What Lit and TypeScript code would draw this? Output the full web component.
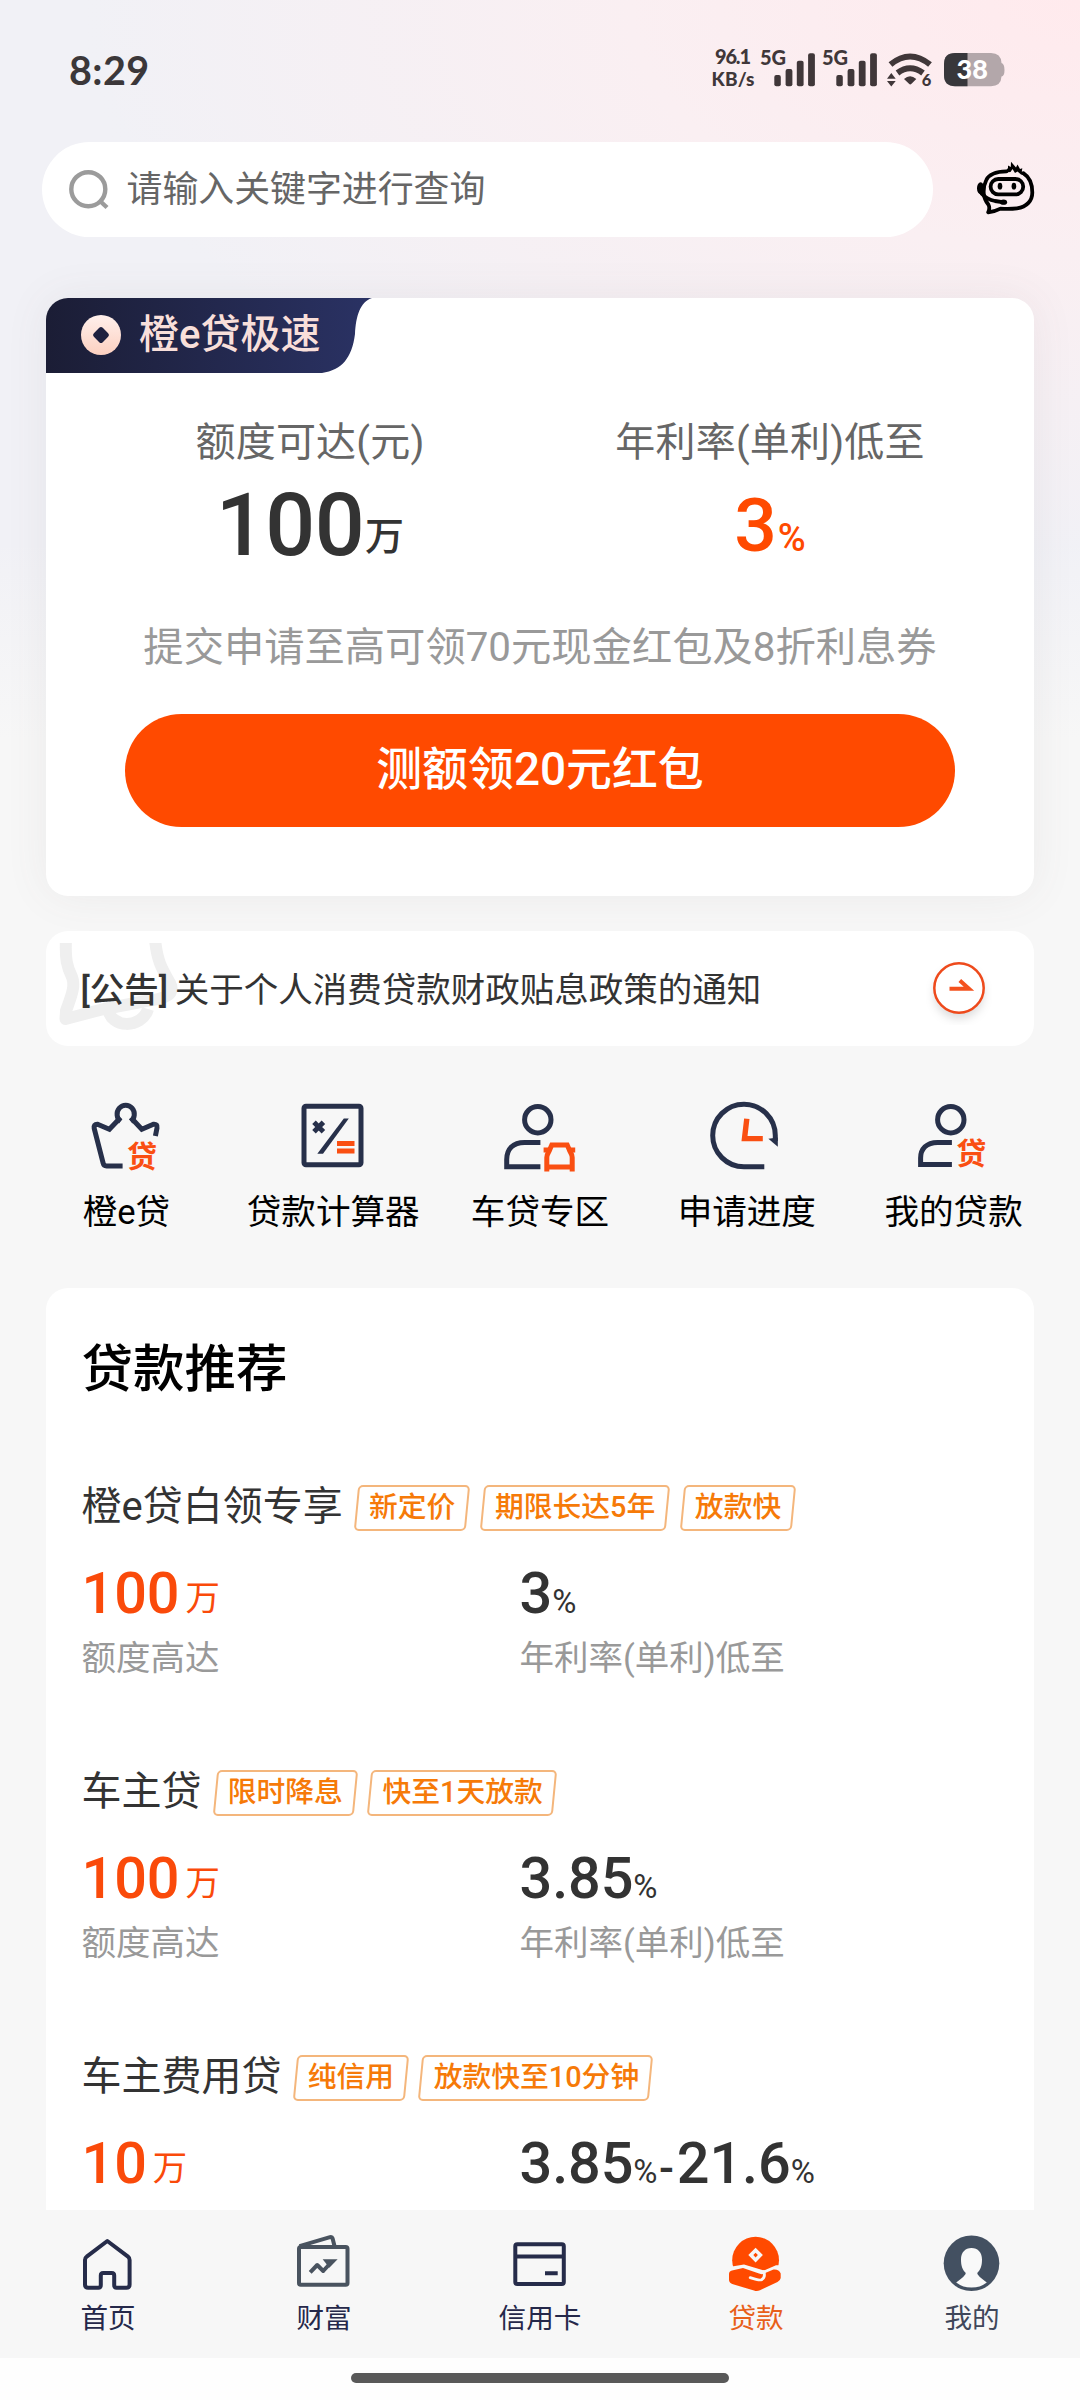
import { LitElement, html, svg, css, nothing } from "lit";
import { customElement, property } from "lit/decorators.js";

interface Product {
  name: string;
  tags: string[];
  amount: string;
  rates: string[];
  labels: boolean;
}

const PRODUCTS: Product[] = [
  { name: "橙e贷白领专享", tags: ["新定价", "期限长达5年", "放款快"], amount: "100", rates: ["3"], labels: true },
  { name: "车主贷", tags: ["限时降息", "快至1天放款"], amount: "100", rates: ["3.85"], labels: true },
  { name: "车主费用贷", tags: ["纯信用", "放款快至10分钟"], amount: "10", rates: ["3.85", "21.6"], labels: false },
];

const menuIcons: Record<string, unknown> = {
  crown: svg`
    <g class="line">
      <path d="M36.6 70H20.5Q17.8 70 17.2 67.3L8.2 32.5Q7.3 28.2 11.5 28.3L23.4 33.2L34.6 21.5"/>
      <path d="M34.6 25.5A8.6 9 0 1 1 44.8 25.5"/>
      <path d="M44.8 21.5L55.8 33.2L67.5 28.3Q71.8 28 71 32L69.4 40"/>
    </g>
    <text class="glyph" x="41" y="70.6">贷</text>`,
  calc: svg`
    <g class="line"><rect x="12" y="10.3" width="57" height="58.4" rx="2"/><path d="M22 26.3L31.4 35.7M31.4 26.3L22 35.7"/></g>
    <path class="navy" d="M51.8 22.4H56.8L31 57.7H25.3Z"/>
    <path class="orange" d="M45 45H62.5V50H45ZM45 52.5H62.5V57.5H45Z"/>`,
  car: svg`
    <g class="line"><circle cx="38.8" cy="23.7" r="13.2"/><path d="M41.4 46.4H25.5C14 46.4 7.7 53 7.7 63.5V70.8H41.4"/></g>
    <g class="accent"><path d="M47.8 75.5V61.5C47.8 57.5 50 56.5 51 53L52.8 48.9H68.2L70 53C71 56.5 73.2 57.5 73.2 61.5V75.5M47.8 70.9H73.2"/></g>
    <path class="orange" d="M44.6 51.5H51V56.5H44.6ZM70 51.5H76.2V56.5H70Z"/>`,
  clock: svg`
    <g class="line"><path d="M69.3 45V39.5A31.3 31.3 0 1 0 38 70.8H58.3"/></g>
    <path class="navy" d="M62.4 42.7L71.8 41.5V50.8Z"/>
    <path class="clockhand" d="M40.8 22.7L38.5 42.6H56.8"/>`,
  mine: svg`
    <g class="line"><circle cx="37.8" cy="23.7" r="13.2"/><path d="M38.9 46.4H24.5C13.5 46.4 7.6 53 7.6 62V68.6H38.9"/></g>
    <text class="glyph" x="43.2" y="68.2">贷</text>`,
};

const tabIcons: Record<string, unknown> = {
  home: svg`<g class="line"><path d="M29.3 7L50 22.6Q51.6 23.8 51.6 26V50.5Q51.6 53.7 48.5 53.7H38.5Q36.2 53.7 36.2 51V41.5Q36.2 39 33.7 39H25.2Q22.8 39 22.8 41.5V51Q22.8 53.7 20.4 53.7H10Q7 53.7 7 50.5V26Q7 23.8 8.7 22.6Z"/></g>`,
  wealth: svg`
    <g class="line grey"><rect x="5" y="13" width="48.5" height="37.7" rx="1.8"/><path d="M5.5 12.2L36 3.2Q38 2.7 38.6 4.5L40.6 12.5M16.2 38.3L23.2 31L29.2 37L37 28.5"/></g>
    <path class="greyfill" d="M28.7 25.2H43.6L35.3 33.8Z"/>`,
  card: svg`<g class="line"><rect x="5.3" y="10.3" width="48.5" height="39.8" rx="2"/><path d="M5.3 22.4H53.8M35 39.3H47.7"/></g>`,
  loan: svg`
    <circle cx="29.6" cy="26.2" r="23.4" fill="#ff4a00"/>
    <path fill="#f7f7f7" d="M0 33.6L18 30.4L38 36.4L50 31.2H60V60H0Z"/>
    <path fill="#ff4a00" d="M3 40Q3 37.3 6 36.6L17 34L33 39.5Q36.5 41 38 39.5L47.5 35.5Q53 35 54.7 39.5V44Q54.6 46 51.5 48L34 56.2Q31 57.7 28 56.5L7 50.3Q3 48.7 3 46Z"/>
    <path fill="none" stroke="#f7f7f7" stroke-width="2.8" stroke-linecap="round" d="M37.8 37.5Q39.8 43.5 35.5 45.7Q33.5 46.8 24.2 43.6"/>
    <path fill="#f7f7f7" fill-rule="evenodd" d="M29.6 13.8L36.9 21.1L29.6 28.4L22.3 21.1ZM29.6 18.8L27.3 21.1L29.6 23.4L31.9 21.1Z"/>`,
  user: svg`
    <circle cx="29.5" cy="29.3" r="27.8" fill="#435061"/>
    <path fill="#f9f9f9" d="M29.5 14C36 14 40 18.5 40 25.5C40 32 38.5 36 35.2 39Q35 41.5 44.8 48.4Q38 53.6 29.5 53.6Q21 53.6 14.2 48.4Q24 41.5 23.8 39C20.5 36 19 32 19 25.5C19 18.5 23 14 29.5 14Z"/>`,
};

@customElement("skew-tag")
class SkewTag extends LitElement {
  static styles = css`
    :host { display: block; }
    .tag {
      position: relative;
      height: 45.5px;
      padding: 0 14.4px 0 15.2px;
      font: 500 28.8px/44px Roboto, "Noto Sans CJK SC", sans-serif;
      color: #f67a08;
      white-space: nowrap;
    }
    .frame {
      position: absolute;
      inset: 0 2px;
      border: 2px solid #f4b67c;
      border-radius: 5px;
      transform: skewX(-5.5deg);
    }
  `;
  render() {
    return html`<div class="tag"><div class="frame"></div><slot></slot></div>`;
  }
}

@customElement("loan-item")
class LoanItem extends LitElement {
  @property({ attribute: false }) item!: Product;
  static styles = css`
    :host { display: block; height: 285px; }
    .head { display: flex; height: 46px; gap: 10px; }
    .name { font-size: 40px; line-height: 44px; color: #333; white-space: nowrap; margin-right: 1px; }
    .cols { display: grid; grid-template-columns: 438px 1fr; margin-top: 30px; }
    .value { font-size: 57.6px; line-height: 66px; height: 64px; font-weight: 500; color: #333; letter-spacing: -0.1px; white-space: nowrap; }
    .value.hot { color: #fa4a0a; }
    .unit { font-size: 33px; line-height: 1; font-weight: 400; letter-spacing: 0; }
    .wan { font-size: 34.4px; vertical-align: 3px; margin-left: 6px; }
    .dash { font-size: 44px; line-height: 1; margin: 0 3px 0 1.5px; }
    .label { font-size: 34.5px; line-height: 44px; margin-top: 11px; color: #999; }
  `;
  render() {
    const { name, tags, amount, rates, labels } = this.item;
    return html`
      <div class="head">
        <div class="name">${name}</div>
        ${tags.map((t) => html`<skew-tag>${t}</skew-tag>`)}
      </div>
      <div class="cols">
        <div>
          <div class="value hot">${amount}<span class="unit wan">万</span></div>
          ${labels ? html`<div class="label">额度高达</div>` : nothing}
        </div>
        <div>
          <div class="value">${rates.map((r, i) => html`${i ? html`<span class="dash">-</span>` : ""}${r}<span class="unit">%</span>`)}</div>
          ${labels ? html`<div class="label">年利率(单利)低至</div>` : nothing}
        </div>
      </div>`;
  }
}

@customElement("status-bar")
class StatusBar extends LitElement {
  static styles = css`
    :host { display: block; height: 142px; }
    .bar { display: flex; justify-content: space-between; align-items: flex-start; padding: 34px 73px 0 69px; font-family: Lato, sans-serif; color: #3b3739; }
    .time { font-size: 39.5px; line-height: 40px; font-weight: 700; letter-spacing: .4px; padding-top: 16px; }
    .icons { display: block; }
    text { font-family: Lato, sans-serif; font-weight: 900; fill: #403739; }
    .fill { fill: #403739; }
    .arc { fill: none; stroke: #403739; stroke-width: 6; }
  `;
  private bars(x: number) {
    return svg`
      <rect class="fill" x=${x} y="25" width="6.5" height="11.3" rx="2"/>
      <rect class="fill" x=${x + 11.3} y="19" width="6.8" height="17.3" rx="2"/>
      <rect class="fill" x=${x + 22.5} y="10.7" width="6.8" height="25.6" rx="2"/>
      <rect class="fill" x=${x + 33.8} y="3.2" width="6.8" height="33.1" rx="2"/>`;
  }
  render() {
    return html`<div class="bar">
      <div class="time">8:29</div>
      <svg class="icons" width="297" height="72" viewBox="0 -16 297 72">
        <text x="5" y="14.4" font-size="20" textLength="36">96.1</text>
        <text x="1.5" y="36.2" font-size="19" textLength="43">KB/s</text>
        <text x="50" y="15.2" font-size="20" textLength="26">5G</text>
        ${this.bars(64.3)}
        <text x="112" y="15.2" font-size="20" textLength="26">5G</text>
        ${this.bars(126.3)}
        <path class="arc" d="M180.5 14.5Q200 -1.5 220 14.5M187.5 23Q200 13.5 213 23"/>
        <path class="fill" d="M194 29Q200 23.5 206.3 29L201.5 33.8Q200.2 35 199 33.8ZM177 28.7L181.3 23L185.7 28.7ZM177 31L181.3 36.6L185.7 31Z"/>
        <text x="211.8" y="36.4" font-size="16.5">6</text>
        <path fill="#b3a7aa" d="M245 3H281Q291 3 291.5 13Q294.5 14 294.5 20Q294.5 26 291.5 26.5Q291 36.2 281 36.2H245Q234 36.2 234 25V14Q234 3 245 3Z"/>
        <path fill="#38373b" d="M245 3H257.5V36.2H245Q234 36.2 234 25V14Q234 3 245 3Z"/>
        <text x="246.6" y="29.4" font-size="27" style="fill:#fff">38</text>
      </svg>
    </div>`;
  }
}

@customElement("app-root")
class AppRoot extends LitElement {
  static styles = css`
    :host { display: block; width: 1080px; height: 2400px; overflow: hidden; background: #fff; font-family: Roboto, "Noto Sans CJK SC", sans-serif; }
    * { box-sizing: border-box; }
    .page {
      height: 2210px; overflow: hidden;
      background:
        linear-gradient(180deg, rgba(247,247,247,0) 0 540px, #f7f7f7 740px),
        radial-gradient(ellipse 1000px 560px at 1080px 0, #ffeaed 0%, #faeff2 45%, rgba(243,241,246,0) 100%),
        #f1f1f6;
    }
    .search-row { display: flex; align-items: center; padding-left: 42px; }
    .search { width: 891px; height: 95px; border-radius: 48px; background: #fff; display: flex; align-items: center; gap: 15.5px; padding-left: 25px; font-size: 35.9px; line-height: 44px; color: #666; }
    .mag { fill: none; stroke: #9b9b9b; stroke-width: 4.4; }
    .robot { margin: 0 0 4px 42px; }
    .robot .l { fill: none; stroke: #000; stroke-width: 3.8; stroke-linejoin: round; stroke-linecap: round; }
    .hero { margin: 61px 46px 0; height: 598px; border-radius: 22px; background: #fff; overflow: hidden; box-shadow: 0 0 44px rgba(100,95,95,.08); }
    .ribbon { width: 326px; height: 75px; display: flex; align-items: center; gap: 17px; padding: 0 0 2px 34px; font-size: 40px; line-height: 50px; font-weight: 500; color: #f8dfda; background: linear-gradient(90deg, #1b1d35, #2a3264); clip-path: path("M0 0H326C314 4 310 18 309 36C306 60 296 72 276 75H0Z"); white-space: nowrap; }
    .coin { flex: none; }
    .stats { display: grid; grid-template-columns: 1fr 1fr; padding: 46px 34px 0; text-align: center; }
    .stat-label { font-size: 40px; line-height: 48px; color: #666; letter-spacing: .2px; }
    .stat-value { margin-top: 7.5px; height: 100px; line-height: 100px; font-weight: 500; color: #333; white-space: nowrap; }
    .big { font-size: 88px; letter-spacing: -.6px; }
    .rate { font-size: 75px; color: #ff4a00; }
    .u { font-size: 38px; line-height: 1; letter-spacing: 0; margin-left: 1px; }
    .wan { font-size: 39px; vertical-align: 5px; margin-left: 1px; }
    .promo { margin-top: 45.5px; font-size: 40.3px; line-height: 56px; color: #999; text-align: center; white-space: nowrap; }
    .cta { display: block; width: 830px; height: 113px; margin: 38px auto 0; padding: 0 0 4px; border: 0; border-radius: 57px; background: #ff4a00; color: #fff; font: 500 45.9px/56px Roboto, "Noto Sans CJK SC", sans-serif; }
    .notice { position: relative; margin: 35px 46px 0; height: 115px; border-radius: 22px; background: #fff; display: flex; align-items: center; padding: 0 42px 0 34.5px; font-size: 34.5px; line-height: 48px; color: #333; }
    .mark { position: absolute; left: 0; top: 12px; }
    .notice-text { position: relative; flex: 1; padding-top: 3px; white-space: nowrap; }
    .notice-text b { font-weight: 500; margin-right: 6.5px; }
    .go { position: relative; margin-top: 6px; }
    .menu { display: grid; grid-template-columns: repeat(5, 206.8px); margin: 50px 0 0 23px; }
    .menu-item { display: flex; flex-direction: column; align-items: center; gap: 13.5px; font-size: 34.6px; line-height: 44px; height: 138px; color: #000; white-space: nowrap; }
    .menu-item svg { margin-left: -1.5px; }
    .menu-item .line { fill: none; stroke: #27304a; stroke-width: 5; }
    .navy { fill: #27304a; }
    .orange { fill: #fa4f12; }
    .accent { fill: none; stroke: #fa4f12; stroke-width: 5; }
    .clockhand { fill: none; stroke: #fa4f12; stroke-width: 5.4; }
    .glyph { font: 700 30px "Noto Sans CJK SC", sans-serif; fill: #fa4f12; }
    .list { margin: 54px 46px 0; height: 960px; padding: 49.5px 35.5px 0; border-radius: 22px; background: #fff; }
    .title { font-size: 51.5px; line-height: 64px; font-weight: 500; color: #000; margin-bottom: 83.5px; }
    .tabs { display: grid; grid-template-columns: repeat(5, 216px); height: 147.5px; padding-top: 24px; background: #f7f7f7; }
    .tab { display: flex; flex-direction: column; align-items: center; gap: 6.6px; font-size: 27.6px; line-height: 36px; color: #25284a; }
    .tab .line { fill: none; stroke: #262c4a; stroke-width: 4; stroke-linejoin: round; }
    .tab .grey { stroke: #49535f; }
    .greyfill { fill: #49535f; }
    .tab.active { color: #e8601a; }
    .tab.soft { color: #40475a; }
    .homebar { height: 42.5px; padding-top: 15.5px; background: #fefefe; }
    .pill { width: 378px; height: 10px; margin: 0 auto; border-radius: 5px; background: #595959; }
  `;

  render() {
    const menu = [["crown", "橙e贷"], ["calc", "贷款计算器"], ["car", "车贷专区"], ["clock", "申请进度"], ["mine", "我的贷款"]];
    const tabs = [["home", "首页", ""], ["wealth", "财富", ""], ["card", "信用卡", ""], ["loan", "贷款", "active"], ["user", "我的", "soft"]];
    return html`
      <main class="page">
        <status-bar></status-bar>
        <div class="search-row">
          <div class="search">
            <svg width="44" height="44" viewBox="0 0 44 44"><g class="mag"><circle cx="21.3" cy="21.2" r="17"/><path d="M33 33L40 39.5"/></g></svg>
            <span>请输入关键字进行查询</span>
          </div>
          <svg class="robot" width="62" height="56" viewBox="0 0 62 56">
            <path class="l" d="M31.5 11.3C22 11.5 14 14 11.3 20C9.3 24 8.3 29 8.8 34C9.3 39 11.2 42 13.5 44.8Q15.2 48 13.2 52.3Q20 51.5 25.5 48.6C31 48.9 37 48.9 42 48.3C52 47 57.3 40.5 57.3 32.5C57.3 24.5 55 17.5 48.3 13.2"/>
            <path d="M29.5 12.5L33 8L33 5.5L35.8 7L36 1.8L41 7.5L42.5 4.5L45 9L47.3 8.3L46.8 11.5L51.5 16L46 14.5L42.5 11.5L40 13L37.5 9L35.5 12Z"/>
            <rect class="l" x="15.6" y="19" width="32.6" height="15.3" rx="7.6"/>
            <ellipse cx="25" cy="26.2" rx="2.3" ry="3.4"/><ellipse cx="38.9" cy="26.2" rx="2.3" ry="3.4"/>
            <ellipse cx="5.6" cy="28.3" rx="3.6" ry="6"/>
            <path class="l" d="M6.5 33.5Q12 39.5 20 41L29 42.3"/>
            <ellipse cx="28.5" cy="42.2" rx="3.6" ry="2.6"/>
          </svg>
        </div>

        <section class="hero">
          <div class="ribbon">
            <svg class="coin" width="42" height="42" viewBox="0 0 42 42">
              <defs><linearGradient id="c" x1="0" y1="0" x2="0" y2="1"><stop offset="0" stop-color="#fff0ec"/><stop offset="1" stop-color="#fcd0c0"/></linearGradient></defs>
              <circle cx="21" cy="21" r="20" fill="url(#c)"/>
              <rect x="14.7" y="14.7" width="12.6" height="12.6" rx="2.5" fill="#1e2140" transform="rotate(45 21 21)"/>
            </svg>
            <span>橙e贷极速</span>
          </div>
          <div class="stats">
            <div>
              <div class="stat-label">额度可达(元)</div>
              <div class="stat-value"><span class="big">100</span><span class="u wan">万</span></div>
            </div>
            <div>
              <div class="stat-label">年利率(单利)低至</div>
              <div class="stat-value rate">3<span class="u">%</span></div>
            </div>
          </div>
          <div class="promo">提交申请至高可领70元现金红包及8折利息券</div>
          <button class="cta">测额领20元红包</button>
        </section>

        <section class="notice">
          <svg class="mark" width="140" height="90" viewBox="0 12 140 90">
            <path fill="none" stroke="#efefef" stroke-width="12" stroke-linejoin="round" d="M20 8C19 28 21 36 26 46C30 56 24 68 20 80L19.5 88L48 80.5L62 77C64 98 96 98 102 78M109 8C111 30 116 38 124 52C130 64 118 68 100 70L58 78"/>
          </svg>
          <div class="notice-text"><b>[公告]</b>关于个人消费贷款财政贴息政策的通知</div>
          <svg class="go" width="66" height="66" viewBox="0 0 66 66">
            <defs><filter id="s" x="-30%" y="-30%" width="160%" height="170%"><feDropShadow dx="0" dy="6" stdDeviation="5" flood-color="#000" flood-opacity=".14"/></filter></defs>
            <circle cx="33" cy="29" r="24.7" fill="#fff" filter="url(#s)"/>
            <circle cx="33" cy="29" r="24.7" fill="#fff" stroke="#ee4a1c" stroke-width="2.5"/>
            <path fill="none" stroke="#f4511e" stroke-width="4" d="M23.5 29.8H43L33.8 21.5"/>
          </svg>
        </section>

        <nav class="menu">
          ${menu.map(([icon, label]) => html`<div class="menu-item"><svg width="80" height="80" viewBox="0 0 80 80">${menuIcons[icon]}</svg><span>${label}</span></div>`)}
        </nav>

        <section class="list">
          <div class="title">贷款推荐</div>
          ${PRODUCTS.map((p) => html`<loan-item .item=${p}></loan-item>`)}
        </section>
      </main>
      <nav class="tabs">
        ${tabs.map(([icon, label, tone]) => html`<div class="tab ${tone}"><svg width="60" height="60" viewBox="0 0 60 60">${tabIcons[icon]}</svg><span>${label}</span></div>`)}
      </nav>
      <div class="homebar"><div class="pill"></div></div>`;
  }
}
